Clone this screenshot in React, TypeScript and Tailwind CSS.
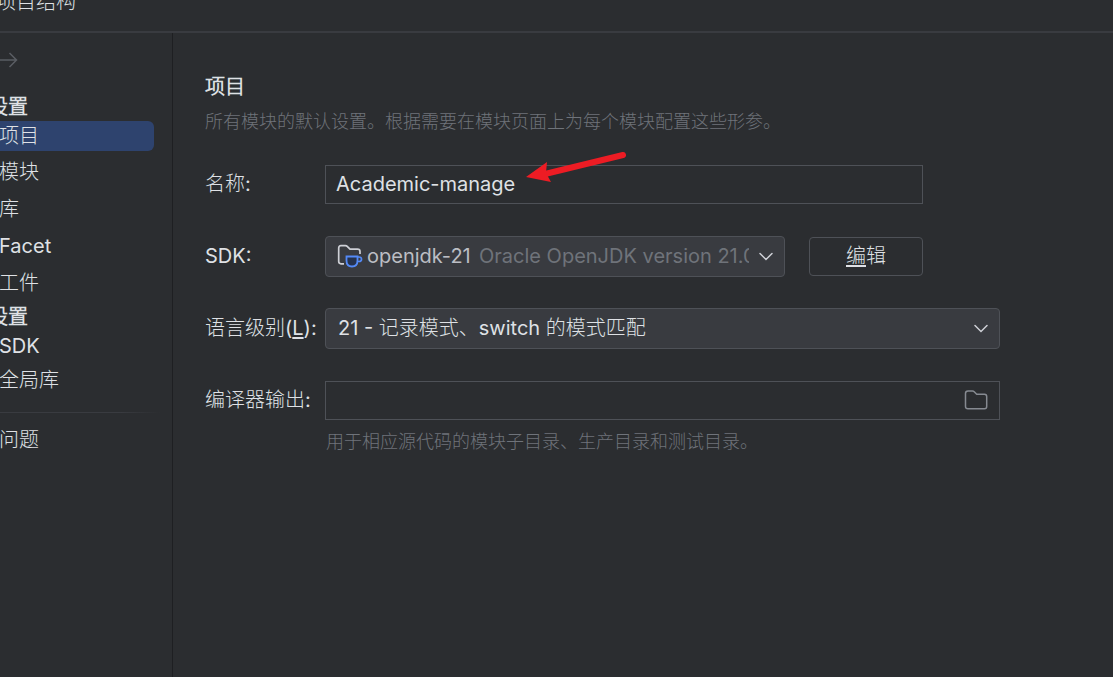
import clsx from "clsx";
import { useState } from "react";

const projectItems = ["项目", "模块", "库", "Facet", "工件"];
const platformItems = ["SDK", "全局库"];

const fieldClass =
  "w-full h-[39px] border border-[#4e5157] bg-transparent text-[20px] text-[#dfe1e5] outline-none focus:border-[#3574f0]";
const selectClass =
  "w-full h-[41px] appearance-none rounded border border-[#4e5157] bg-[#393b40] text-[20px] outline-none focus:border-[#3574f0]";

const ForwardIcon = () => (
  <svg width="18" height="16" viewBox="0 0 18 16" fill="none" stroke="#5a5d63">
    <path d="M0 8H16.500M9.500 1L16.500 8L9.500 15" strokeWidth="1.500" />
  </svg>
);

const ChevronIcon = () => (
  <svg width="14" height="9" viewBox="0 0 14 9" fill="none" stroke="#ced0d6">
    <path d="M1 1.500L7 7.500L13 1.500" strokeWidth="1.500" strokeLinecap="round" />
  </svg>
);

const FolderIcon = () => (
  <svg width="24" height="20" viewBox="0 0 24 20" fill="none" stroke="#868a91">
    <path
      d="M1.500 3.500Q1.500 1 4 1H8.500Q9.500 1 10.200 1.700L12.700 4.200H20.500Q22.700 4.200 22.700 6.500V16.500Q22.700 18.800 20.500 18.800H4Q1.500 18.800 1.500 16.500Z"
      strokeWidth="1.500"
    />
  </svg>
);

const SdkIcon = () => (
  <svg width="26" height="24" viewBox="0 0 26 24" fill="none">
    <path
      d="M7 19.800H4Q1.700 19.800 1.700 17.500V4Q1.700 1.700 4 1.700H8.500Q9.500 1.700 10.200 2.400L13 5.200H20.500Q23 5.200 23 7.500V10"
      stroke="#ced0d6"
      strokeWidth="1.700"
    />
    <path
      d="M9.500 12.500H20.500V16.500Q20.500 22.500 15 22.500Q9.500 22.500 9.500 16.500Z"
      fill="#25324d"
      stroke="#548af7"
      strokeWidth="1.800"
    />
    <path
      d="M20.500 13H22Q24.500 13 24.500 15.200Q24.500 17.500 22 17.500H20.500"
      stroke="#548af7"
      strokeWidth="1.700"
    />
  </svg>
);

const PointerArrow = () => (
  <svg
    className="pointer-events-none absolute left-[200px] -top-4 z-10"
    width="104"
    height="36"
    viewBox="0 0 104 36"
  >
    <path d="M20 25L98 6" stroke="#ed1c24" strokeWidth="6" strokeLinecap="round" />
    <path d="M1 28L22 13L21 24L26 33Z" fill="#ed1c24" />
  </svg>
);

export default function App() {
  const [active, setActive] = useState("项目");
  const [name, setName] = useState("Academic-manage");
  const [output, setOutput] = useState("");

  const renderItem = (item: string, height: string) => (
    <button
      key={item}
      type="button"
      onClick={() => setActive(item)}
      className={clsx(
        "mr-[18px] flex items-center rounded-r-md text-left",
        height,
        active === item && "bg-[#2e436e]"
      )}
    >
      <span className="-ml-px">{item}</span>
    </button>
  );

  return (
    <div className="flex min-h-screen flex-col overflow-hidden bg-[#2b2d30] font-['Inter','Noto_Sans_CJK_SC_Light','Noto_Sans_CJK_SC',sans-serif] text-[20px] leading-7 text-[#dfe1e5]">
      <header className="h-[33px] border-b-2 border-[#393b40]">
        <h1 className="-ml-1 -mt-3">项目结构</h1>
      </header>

      <div className="flex flex-1">
        <nav className="flex w-[173px] shrink-0 flex-col overflow-hidden border-r border-[#1e1f22]">
          <button
            type="button"
            aria-label="forward"
            className="mt-3 flex h-[30px] w-6 items-center"
          >
            <ForwardIcon />
          </button>
          <h2 className="-ml-3 mt-4 h-[30px] font-bold leading-8">设置</h2>
          <div className="mb-0.5 flex flex-col">
            {renderItem(projectItems[0], "h-[30px]")}
          </div>
          {projectItems.slice(1).map((item) => renderItem(item, "h-[37px]"))}
          <h2 className="-ml-3 h-[30px] font-bold leading-8">设置</h2>
          {renderItem(platformItems[0], "h-[30px]")}
          {renderItem(platformItems[1], "h-[37px]")}
          <hr className="mb-2 mr-3 mt-3.5 h-px border-0 bg-linear-to-r from-[#393b40] from-75% to-transparent" />
          {renderItem("问题", "h-[37px]")}
        </nav>

        <main className="flex-1 pl-8 pr-[113px] pt-10">
          <h2 className="font-bold">项目</h2>
          <p className="mt-[7px] text-[18px] text-[#6f737a]">
            所有模块的默认设置。根据需要在模块页面上为每个模块配置这些形参。
          </p>

          <form className="mt-3 grid grid-cols-[120px_1fr] auto-rows-[72px] items-center">
            <label htmlFor="name">名称:</label>
            <div className="relative mr-[77px]">
              <input
                id="name"
                value={name}
                onChange={(e) => setName(e.target.value)}
                className={clsx(fieldClass, "px-2.5")}
              />
              <PointerArrow />
            </div>

            <label htmlFor="sdk">SDK:</label>
            <div className="mr-[77px] flex items-center gap-6">
              <div className="relative flex-1">
                <select
                  id="sdk"
                  className={clsx(selectClass, "pl-[41px] pr-9 text-[#bcbec4]")}
                >
                  <option>openjdk-21</option>
                </select>
                <div className="pointer-events-none absolute inset-0 flex items-center px-3">
                  <SdkIcon />
                  <span className="ml-[116px] w-0 flex-1 overflow-hidden whitespace-nowrap text-[#6f737a]">
                    Oracle OpenJDK version 21.0.1
                  </span>
                  <span className="ml-2.5">
                    <ChevronIcon />
                  </span>
                </div>
              </div>
              <button
                type="button"
                className="h-[39px] w-[114px] rounded border border-[#4e5157]"
              >
                <span className="underline underline-offset-2">编</span>辑
              </button>
            </div>

            <label htmlFor="level">
              语言级别(<span className="underline underline-offset-2">L</span>):
            </label>
            <div className="relative">
              <select id="level" className={clsx(selectClass, "pl-3 pr-9")}>
                <option>21 - 记录模式、switch 的模式匹配</option>
              </select>
              <div className="pointer-events-none absolute inset-y-0 right-3 flex items-center">
                <ChevronIcon />
              </div>
            </div>

            <label htmlFor="output">编译器输出:</label>
            <div className="relative">
              <input
                id="output"
                value={output}
                onChange={(e) => setOutput(e.target.value)}
                className={clsx(fieldClass, "pl-2.5 pr-10")}
              />
              <button
                type="button"
                aria-label="browse"
                className="absolute inset-y-0 right-3 flex items-center"
              >
                <FolderIcon />
              </button>
            </div>
          </form>
          <p className="-mt-2 ml-[121px] text-[18px] text-[#6f737a]">
            用于相应源代码的模块子目录、生产目录和测试目录。
          </p>
        </main>
      </div>
    </div>
  );
}
